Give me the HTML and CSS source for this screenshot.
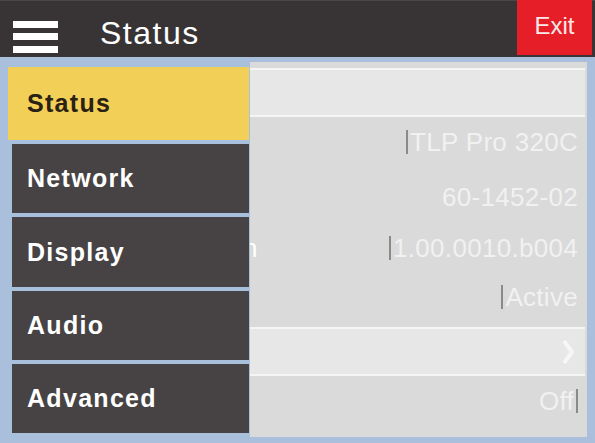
FILE: index.html
```html
<!DOCTYPE html>
<html lang="en">
<head>
  <meta charset="UTF-8">
  <meta name="viewport" content="width=device-width, initial-scale=1.0">
  <title>Status</title>
  <link rel="stylesheet" href="styles.css">
</head>
<body>
  <header class="topbar">
    <button class="menu-btn" aria-label="Menu">
      <svg width="45" height="33" viewBox="0 0 45 33">
        <rect x="0" y="0" width="45" height="7" fill="#ffffff"/>
        <rect x="0" y="12" width="45" height="7" fill="#ffffff"/>
        <rect x="0" y="25" width="45" height="7" fill="#ffffff"/>
      </svg>
    </button>
    <h1 class="title">Status</h1>
    <button class="exit-btn">Exit</button>
  </header>

  <main class="screen">
    <div class="panel">
      <div class="row row-lit"></div>
      <div class="row row-1"><span class="value"><i class="caret"></i>TLP Pro 320C</span></div>
      <div class="row row-2"><span class="value">60-1452-02</span></div>
      <div class="row row-3">
        <!-- long label runs out from under the drawer -->
        <span class="label-peek"><span>n</span></span>
        <span class="value"><i class="caret"></i>1.00.0010.b004</span>
      </div>
      <div class="row row-4"><span class="value"><i class="caret"></i>Active</span></div>
      <div class="row row-lit row-link">
        <svg class="chevron" width="12" height="26" viewBox="0 0 12 26">
          <polyline points="2,2 10,13 2,24" fill="none" stroke="#f7f7f7" stroke-width="4"/>
        </svg>
      </div>
      <div class="row row-5"><span class="value">Off<i class="caret caret-after"></i></span></div>
    </div>

    <!-- slide-out menu drawn over the status panel -->
    <nav class="drawer">
      <a class="drawer-item active">Status</a>
      <a class="drawer-item">Network</a>
      <a class="drawer-item">Display</a>
      <a class="drawer-item">Audio</a>
      <a class="drawer-item">Advanced</a>
    </nav>
  </main>
</body>
</html>
```

FILE: styles.css
```css
body {
  margin: 0;
  padding: 0;
  width: 595px;
  height: 443px;
  overflow: hidden;
  background-color: #a9bfdb;
  font-family: 'Liberation Sans', Arial, sans-serif;
}

.topbar {
  display: flex;
  align-items: center;
  height: 57px;
  padding-right: 3px;
  background-color: #383435;
  box-sizing: border-box;
  border-top: 1px solid #4b4748;
}

.menu-btn {
  background: none;
  border: none;
  padding: 0;
  margin-left: 13px;
  margin-top: 16px;
  display: flex;
}

.title {
  margin: 0 0 0 42px;
  flex: 1;
  color: #ffffff;
  font-size: 32px;
  font-weight: normal;
  letter-spacing: 1.5px;
  padding-top: 9px;
}

.exit-btn {
  align-self: stretch;
  width: 75px;
  margin-top: -1px;
  margin-bottom: 2px;
  border: none;
  background-color: #e61e27;
  color: #fbe9e9;
  font-family: inherit;
  font-size: 24px;
  padding: 0 0 3px 0;
}

.screen {
  position: relative;
  height: 386px;
  padding: 5px 8px 6px 8px;
  box-sizing: border-box;
}

.panel {
  height: 100%;
  background-color: #dadada;
  padding-top: 6px;
  box-sizing: border-box;
  display: flex;
  flex-direction: column;
}

.row {
  display: flex;
  align-items: center;
  justify-content: flex-end;
  height: 52px;
  padding: 0 9px 0 0;
  box-sizing: border-box;
  color: #f1f1f1;
  font-size: 26px;
  letter-spacing: 0.3px;
}

.row-lit {
  height: 49px;
  margin-right: 2px;
  padding-right: 10px;
  background-color: #e7e7e7;
  border-top: 2px solid #f5f5f5;
  border-bottom: 2px solid #f5f5f5;
}

.row-1 { height: 54px; padding-bottom: 4px; }
.row-2 { height: 52px; }
.row-3 { height: 50px; justify-content: space-between; }
.row-4 { height: 54px; padding-bottom: 6px; }
.row-link { height: 49px; }
.row-5 { height: 52px; padding-bottom: 2px; }

.label-peek {
  margin-left: 235px;
  color: #ffffff;
}

.value {
  display: flex;
  align-items: center;
  white-space: nowrap;
}

.caret {
  display: inline-block;
  width: 2px;
  height: 24px;
  margin-right: 2px;
  background-color: #8a8a8a;
}

.caret-after {
  margin-right: 0;
  margin-left: 2px;
}

.chevron {
  margin-right: 1px;
}

.drawer {
  position: absolute;
  top: 5px;
  left: 8px;
  bottom: 6px;
  width: 242px;
  padding: 5px 1px 4px 0;
  box-sizing: border-box;
  background-color: #a9c0dd;
  display: flex;
  flex-direction: column;
  gap: 4px;
}

.drawer-item {
  flex: 1;
  display: flex;
  align-items: center;
  margin-left: 4px;
  padding-left: 15px;
  background-color: #474344;
  color: #ffffff;
  font-size: 25px;
  font-weight: bold;
  letter-spacing: 1.3px;
}

.drawer-item.active {
  flex: 1.06;
  margin-left: 0;
  padding-left: 19px;
  background-color: #f2cf56;
  color: #2a2115;
}
```
